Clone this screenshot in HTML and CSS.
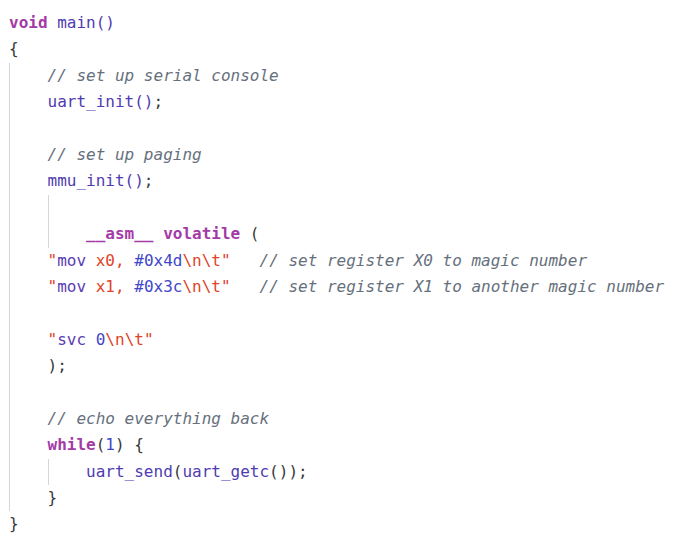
FILE: index.html
```html
<!DOCTYPE html>
<html>
<head>
<meta charset="utf-8">
<link rel="stylesheet" href="styles.css">
</head>
<body>
<div class="code">
<div class="ln"><span class="kw">void</span> <span class="fn">main()</span></div>
<div class="ln"><span class="pn">{</span></div>
<div class="blk">
<div class="ln">    <span class="cm">// set up serial console</span></div>
<div class="ln">    <span class="fn">uart_init</span><span class="fn">()</span><span class="pn">;</span></div>
<div class="ln"> </div>
<div class="ln">    <span class="cm">// set up paging</span></div>
<div class="ln">    <span class="fn">mmu_init</span><span class="fn">()</span><span class="pn">;</span></div>
<div class="blk blk-in">
<div class="ln"> </div>
<div class="ln">        <span class="kw">__asm__</span> <span class="kw">volatile</span> <span class="pn">(</span></div>
</div>
<div class="ln">    <span class="st">"</span><span class="op">mov</span> <span class="st">x0, </span><span class="nu">#0x4d</span><span class="st">\n\t"</span>   <span class="cm">// set register X0 to magic number</span></div>
<div class="ln">    <span class="st">"</span><span class="op">mov</span> <span class="st">x1, </span><span class="nu">#0x3c</span><span class="st">\n\t"</span>   <span class="cm">// set register X1 to another magic number</span></div>
<div class="ln"> </div>
<div class="ln">    <span class="st">"</span><span class="op">svc</span> <span class="nu">0</span><span class="st">\n\t"</span></div>
<div class="ln">    <span class="pn">);</span></div>
<div class="ln"> </div>
<div class="ln">    <span class="cm">// echo everything back</span></div>
<div class="ln">    <span class="kw">while</span><span class="pn">(</span><span class="nu">1</span><span class="pn">) {</span></div>
<div class="blk blk-in">
<div class="ln">        <span class="fn">uart_send</span><span class="pn">(</span><span class="fn">uart_getc</span><span class="pn">());</span></div>
</div>
<div class="ln">    <span class="pn">}</span></div>
</div>
<div class="ln"><span class="pn">}</span></div>
</div>
</body>
</html>
```
FILE: styles.css
```css
html, body {
  margin: 0;
  padding: 0;
  background: #ffffff;
}
.code {
  padding: 10px 0 0 9px;
  font-family: "DejaVu Sans Mono", "Liberation Mono", monospace;
  font-size: 16px;
  line-height: 26.4px;
  color: #3a3a3a;
}
.ln {
  white-space: pre;
  height: 26.4px;
}
.blk {
  background-image: linear-gradient(#d6d6d6, #d6d6d6);
  background-repeat: no-repeat;
  background-size: 1px 100%;
  background-position: 0 0;
}
.blk-in {
  background-position: 38.5px 0;
}
.kw {
  color: #a43aa6;
  font-weight: bold;
}
.fn {
  color: #4f3cb0;
}
.pn {
  color: #383838;
}
.cm {
  color: #66707c;
  font-style: italic;
}
.st {
  color: #e0432a;
}
.op {
  color: #5b3cb4;
}
.nu {
  color: #3f47c8;
}
```
